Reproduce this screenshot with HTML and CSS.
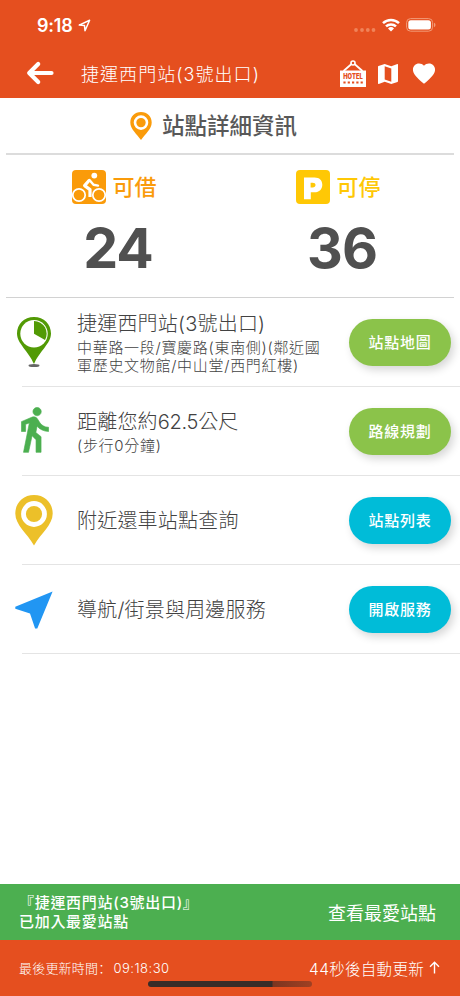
FILE: index.html
```html
<!DOCTYPE html>
<html lang="zh-Hant">
<head>
<meta charset="utf-8">
<meta name="viewport" content="width=device-width, initial-scale=1">
<title>站點詳細資訊</title>
<link rel="stylesheet" href="styles.css">
</head>
<body>
<div class="app">
  <header class="top">
    <div class="status">
      <span class="clock">9:18</span>
      <svg class="locate" width="13" height="13" viewBox="0 0 13 13"><path d="M1.2 6.1 11.6 1.2 7 11.8 6.5 6.6Z" fill="none" stroke="#fff" stroke-width="1.5" stroke-linejoin="round"/></svg>
      <svg class="signal" width="22" height="4" viewBox="0 0 22 4" fill="#f08359"><circle cx="2" cy="2" r="1.9"/><circle cx="8" cy="2" r="1.9"/><circle cx="13.800" cy="2" r="1.9"/><circle cx="19.500" cy="2" r="1.9"/></svg>
      <svg class="wifi" width="18" height="14" viewBox="0 0 18 14"><g fill="none" stroke="#fff" stroke-width="2.500"><path d="M1 5.200a11.500 11.500 0 0 1 16 0"/><path d="M4 8.400a7.200 7.200 0 0 1 10 0"/></g><path d="M9 13.400 6 10.500a4.300 4.300 0 0 1 6 0Z" fill="#fff"/></svg>
      <svg class="battery" width="30" height="14" viewBox="0 0 30 14"><rect x=".6" y=".6" width="26" height="12.600" rx="4" fill="none" stroke="#f29b78"/><rect x="2.300" y="2.300" width="22.600" height="9.200" rx="2.500" fill="#fff"/><path d="M28 4.800v4.400q1.500-.6 1.500-2.200T28 4.800Z" fill="#f29b78"/></svg>
    </div>
    <div class="nav">
      <svg class="back" width="28" height="24" viewBox="0 0 28 24"><path d="M12.200 3 3.200 12l9 9M3.600 12H25.500" fill="none" stroke="#fff" stroke-width="4.200" stroke-linecap="round" stroke-linejoin="round"/></svg>
      <h1 class="nav-title">捷運西門站(3號出口)</h1>
      <svg class="hotel" width="26" height="28" viewBox="0 0 26 28"><path d="M3.500 11 11.500 4M22.500 11 14.500 4" stroke="#fff" stroke-width="1.700"/><circle cx="13" cy="3" r="2" fill="none" stroke="#fff" stroke-width="1.600"/><path d="M0 10.500h26V27H0Z" fill="#fff"/><text x="13" y="19.300" text-anchor="middle" textLength="19.500" lengthAdjust="spacingAndGlyphs" class="hotel-word">HOTEL</text><path d="M3.400 22.500h19.600" stroke="#e54f1f" stroke-width="2" stroke-dasharray="2.200 2.100"/></svg>
      <svg class="map" width="20" height="20" viewBox="0 0 20 20"><path fill="#fff" fill-rule="evenodd" d="M19.400.1 13.300 2.300 6.700 0 .5 2.100Q0 2.300 0 2.700v16.600q0 .7.700.6l6-2.200 6.600 2.300 6.200-2.100q.5-.2.500-.6V.7q0-.7-.6-.6ZM13.300 17.800l-6.600-2.400V2.200l6.600 2.400Z"/></svg>
      <svg class="heart" width="24" height="21" viewBox="1.500 2.500 21 19"><path fill="#fff" d="m12 21.350-1.450-1.320C5.400 15.360 2 12.280 2 8.500 2 5.420 4.420 3 7.500 3c1.740 0 3.410.81 4.500 2.090C13.090 3.810 14.760 3 16.500 3 19.580 3 22 5.420 22 8.500c0 3.780-3.400 6.860-8.550 11.540Z"/></svg>
    </div>
  </header>

  <main class="content">
    <div class="heading">
      <svg width="22" height="28" viewBox="0 0 22 28"><path fill="#fa9b0a" d="M11 0C4.700 0 .3 4.500.3 10.400.3 17 7 22 11 28c4-6 10.700-11 10.700-17.600C21.700 4.500 17.300 0 11 0Z"/><circle cx="11" cy="10.600" r="6" fill="none" stroke="#fff" stroke-width="2.600"/></svg>
      <h2 class="heading-text">站點詳細資訊</h2>
    </div>
    <section class="stats">
      <div class="stat">
        <div class="stat-label rent">
          <svg width="34" height="34" viewBox="0 0 34 34"><rect width="34" height="34" rx="4" fill="#fa9b0a"/><g fill="none" stroke="#fff"><circle cx="7" cy="25" r="6.200" stroke-width="1.700"/><circle cx="27" cy="25" r="6.200" stroke-width="1.700"/><path d="M17.500 10 12.600 15.600l5.400 4V27" stroke-width="3.200" stroke-linejoin="round"/><path d="m17.500 10 4 4.800 4.500.8" stroke-width="2.400" stroke-linecap="round" stroke-linejoin="round"/></g><circle cx="22.300" cy="5.600" r="2.900" fill="#fff"/></svg>
          <span>可借</span>
        </div>
        <strong class="count">24</strong>
      </div>
      <div class="stat">
        <div class="stat-label park">
          <svg width="34" height="34" viewBox="0 0 34 34"><rect width="34" height="34" rx="4" fill="#ffc805"/><path fill="#fff" fill-rule="evenodd" d="M8 7.500H18.500c5 0 7.800 2.800 7.800 7.200s-2.900 7.600-7.800 7.600H14.800v7H8Zm6.600 5.200v4.800h2c1.900 0 2.900-.8 2.900-2.400s-1-2.400-2.900-2.400Z"/></svg>
          <span>可停</span>
        </div>
        <strong class="count">36</strong>
      </div>
    </section>

    <ul class="rows">
      <li class="row">
        <div class="row-icon">
          <svg width="36" height="51" viewBox="0 0 36 51"><ellipse cx="18" cy="48.500" rx="5.500" ry="1.500" fill="#666"/><path fill="#529a05" d="M18 0C8 0 1 7.300 1 16.500 1 26.500 12.500 34 18 47 23.500 34 35 26.500 35 16.500 35 7.300 28 0 18 0Z"/><circle cx="18" cy="16.700" r="13.700" fill="#fff"/><path fill="#529a05" d="M18 16.700V4A12.700 12.700 0 0 1 29 23Z"/></svg>
        </div>
        <div class="row-text"><h3 class="row-title">捷運西門站(3號出口)</h3><p class="row-sub">中華路一段/寶慶路(東南側)(鄰近國<br>軍歷史文物館/中山堂/西門紅樓)</p></div>
        <button class="pill green">站點地圖</button>
      </li>
      <li class="row">
        <div class="row-icon walk">
          <svg width="28" height="46" viewBox="5.800 1.300 13.400 22"><path fill="#4caf50" stroke="#4caf50" stroke-width=".3" d="M13.500 5.500c1.100 0 2-.9 2-2s-.9-2-2-2-2 .9-2 2 .9 2 2 2ZM9.800 8.900 7 23h2.400l1.700-8 1.900 2v6h2.400v-7.500l-2.500-2 .6-3C14.800 12 16.800 13 19 13v-2c-1.900 0-3.500-1-4.300-2.400l-1-1.600c-.4-.6-1-1-1.700-1-.3 0-.5.1-.8.1L6 8.300V13h2V9.600l1.800-.7"/></svg>
        </div>
        <div class="row-text"><h3 class="row-title">距離您約<span class="num">62.5</span>公尺</h3><p class="row-sub">(步行0分鐘)</p></div>
        <button class="pill green">路線規劃</button>
      </li>
      <li class="row">
        <div class="row-icon">
          <svg width="38" height="51" viewBox="0 0 38 51"><path fill="#ecc029" d="M19 0C8 0 .3 8 .3 18.500.3 30 12 38 19 50.500 26 38 37.700 30 37.700 18.500 37.700 8 30 0 19 0Z"/><circle cx="19" cy="19" r="10.500" fill="none" stroke="#fff" stroke-width="4.800"/></svg>
        </div>
        <div class="row-text"><h3 class="row-title">附近還車站點查詢</h3></div>
        <button class="pill cyan">站點列表</button>
      </li>
      <li class="row">
        <div class="row-icon">
          <svg width="38" height="38" viewBox="0 0 38 38"><path fill="#2196f3" d="M37.600.4 22.300 37.500h-2.200L15 22.600.3 17.800v-2Z"/></svg>
        </div>
        <div class="row-text"><h3 class="row-title">導航/街景與周邊服務</h3></div>
        <button class="pill cyan">開啟服務</button>
      </li>
    </ul>
  </main>

  <div class="toast">
    <p class="toast-text">『捷運西門站(3號出口)』<br>已加入最愛站點</p>
    <a class="toast-link">查看最愛站點</a>
  </div>
  <footer class="footer">
    <span class="updated">最後更新時間<span class="colon" lang="zh-Hans">：</span><span class="time">09:18:30</span></span>
    <span class="countdown">44秒後自動更新 <svg width="11" height="13" viewBox="0 0 11 13"><path d="M5.500 12.500V1.300M1 5.700l4.500-4.500L10 5.700" fill="none" stroke="#fff" stroke-width="1.400"/></svg></span>
    <div class="home"></div>
  </footer>
</div>
</body>
</html>
```
FILE: styles.css
```css
* { box-sizing: border-box; margin: 0; padding: 0; }
body { font-family: Inter, "Noto Sans CJK TC", sans-serif; color: #505050; background: #fff; }
svg { display: block; flex: none; }
.app { width: 460px; height: 996px; display: flex; flex-direction: column; overflow: hidden; }

.top { height: 98px; background: #e54f1f; color: #fff; flex: none; }
.status { height: 50px; display: flex; align-items: center; padding: 1px 24px 0 37px; }
.clock { font-size: 18px; font-weight: 600; width: 37px; white-space: nowrap; letter-spacing: -.2px; }
.locate { margin-left: 4px; }
.signal { margin: 8px 6px 0 auto; }
.wifi { margin: 0 6px 1px 0; }
.battery { margin-bottom: 1px; }
.nav { height: 48px; display: flex; align-items: center; padding: 0 25px 3px 26px; }
.nav-title { font-size: 18px; font-weight: 300; letter-spacing: 1.05px; margin-left: 27px; white-space: nowrap; flex: 1; }
.hotel { margin: 2px 12px 0 0; }
.hotel-word { font-size: 7px; font-weight: 900; fill: #e54f1f; }
.map { margin: 2px 14px 0 0; }
.heart { margin-top: 2px; margin-right: -1px; }

.content { flex: 1; }
.heading { height: 57px; margin: 0 6px; border-bottom: 2px solid #dcdcdc; display: flex; align-items: center; padding-left: 124px; }
.heading-text { font-size: 22.500px; font-weight: 500; margin-left: 10px; line-height: 30px; white-space: nowrap; color: #585858; }
.stats { height: 143px; margin: 0 6px; border-bottom: 1px solid #d2d2d2; display: grid; grid-template-columns: 1fr 1fr; }
.stat { padding-top: 15px; display: flex; flex-direction: column; align-items: center; }
.stat-label { display: flex; align-items: center; gap: 6px; font-size: 22px; font-weight: 500; line-height: 34px; margin-left: -7px; }
.rent { color: #fa9b0a; }
.park { color: #ffc805; }
.count { font-size: 55.500px; font-weight: 700; line-height: 60px; margin-top: 14px; letter-spacing: -1px; }

.rows { list-style: none; }
.row { height: 89px; display: flex; align-items: center; padding-right: 9px; background: linear-gradient(#e4e4e4, #e4e4e4) 22px 100% / 438px 1px no-repeat; }
.row-icon { width: 68px; display: flex; justify-content: center; flex: none; }
.walk { padding: 0 0 3px 1px; }
.row-text { flex: 1; padding-left: 9px; white-space: nowrap; }
.row-title { font-size: 20px; font-weight: 300; line-height: 28px; letter-spacing: .2px; color: #424242; }
.row-sub { font-size: 15px; font-weight: 300; line-height: 18.500px; letter-spacing: .7px; color: #424242; padding-top: 1px; }
.num { letter-spacing: -.3px; }
.pill { width: 102px; height: 47px; padding-bottom: 2px; border: 0; border-radius: 24px; color: #fff; font: 500 15px Inter, "Noto Sans CJK TC", sans-serif; letter-spacing: .7px; box-shadow: 3px 4px 8px rgba(0,0,0,.16); flex: none; }
.green { background: #8bc34a; }
.cyan { background: #00bcd8; }

.toast { height: 56px; background: #4caf50; color: #fff; display: flex; align-items: center; justify-content: space-between; padding: 0 24px 0 19px; flex: none; }
.toast-text { font-size: 15px; font-weight: 500; line-height: 18.500px; letter-spacing: .7px; white-space: nowrap; padding-top: 1px; }
.toast-link { font-size: 18px; font-weight: 400; white-space: nowrap; }
.footer { height: 56px; background: #e54f1f; color: #fff; position: relative; display: flex; align-items: center; justify-content: space-between; padding: 0 20px 1px 19px; flex: none; }
.updated { font-size: 13px; font-weight: 300; letter-spacing: .2px; white-space: nowrap; }
.colon { font-family: "Noto Sans CJK SC", sans-serif; }
.time { letter-spacing: .5px; margin-left: 2px; }
.countdown { font-size: 15.500px; font-weight: 300; letter-spacing: .3px; display: flex; align-items: center; gap: 5px; white-space: nowrap; }
.home { position: absolute; left: 148px; bottom: 9px; width: 164px; height: 6px; border-radius: 3px; background: linear-gradient(90deg, #382c28 0 124px, #7c3520 125px, #a04022 100%); }
```
